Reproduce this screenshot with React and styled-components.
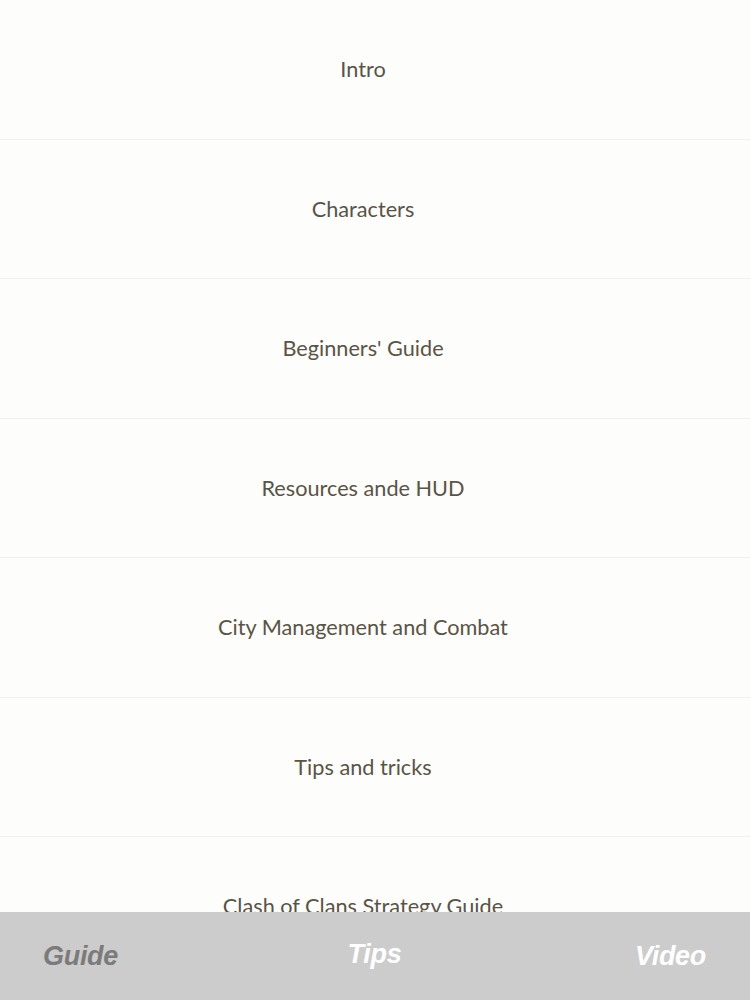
import React from 'react';
import styled, { createGlobalStyle } from 'styled-components';

const Global = createGlobalStyle`
  html, body {
    margin: 0;
    padding: 0;
    background: #fdfdfc;
  }
  body {
    width: 750px;
    height: 1000px;
    overflow: hidden;
  }
`;

const Screen = styled.div`
  position: relative;
  width: 750px;
  height: 1000px;
  overflow: hidden;
  background: #fdfdfc;
`;

const List = styled.ul`
  list-style: none;
  margin: 0;
  padding: 0;
`;

const Row = styled.li`
  height: 139.5px;
  box-sizing: border-box;
  display: flex;
  align-items: center;
  justify-content: center;
  padding-right: 24px;
  border-bottom: 1px solid #f1f0ee;
  font-family: "Lato", "Open Sans", sans-serif;
  font-size: 21.7px;
  color: #5a5446;
`;

const TabBar = styled.nav`
  position: absolute;
  left: 0;
  right: 0;
  bottom: 0;
  height: 88px;
  background: #cccccc;
  display: flex;
  align-items: center;
  justify-content: space-between;
  padding: 0 44px 0 43px;
`;

const Tab = styled.span`
  font-family: "Liberation Sans", Arial, sans-serif;
  font-weight: bold;
  font-style: italic;
  font-size: 27px;
  letter-spacing: -0.3px;
  color: ${p => (p.active ? '#7b7b7b' : '#ffffff')};
  transform: translate(${p => (p.raised ? '-2px, -2px' : '0, 0')});
`;

const items = [
  'Intro',
  'Characters',
  "Beginners' Guide",
  'Resources ande HUD',
  'City Management and Combat',
  'Tips and tricks',
  'Clash of Clans Strategy Guide',
];

export default function App() {
  return (
    <Screen>
      <Global />
      <List>
        {items.map(t => (
          <Row key={t}>{t}</Row>
        ))}
      </List>
      <TabBar>
        <Tab active>Guide</Tab>
        <Tab raised>Tips</Tab>
        <Tab>Video</Tab>
      </TabBar>
    </Screen>
  );
}
